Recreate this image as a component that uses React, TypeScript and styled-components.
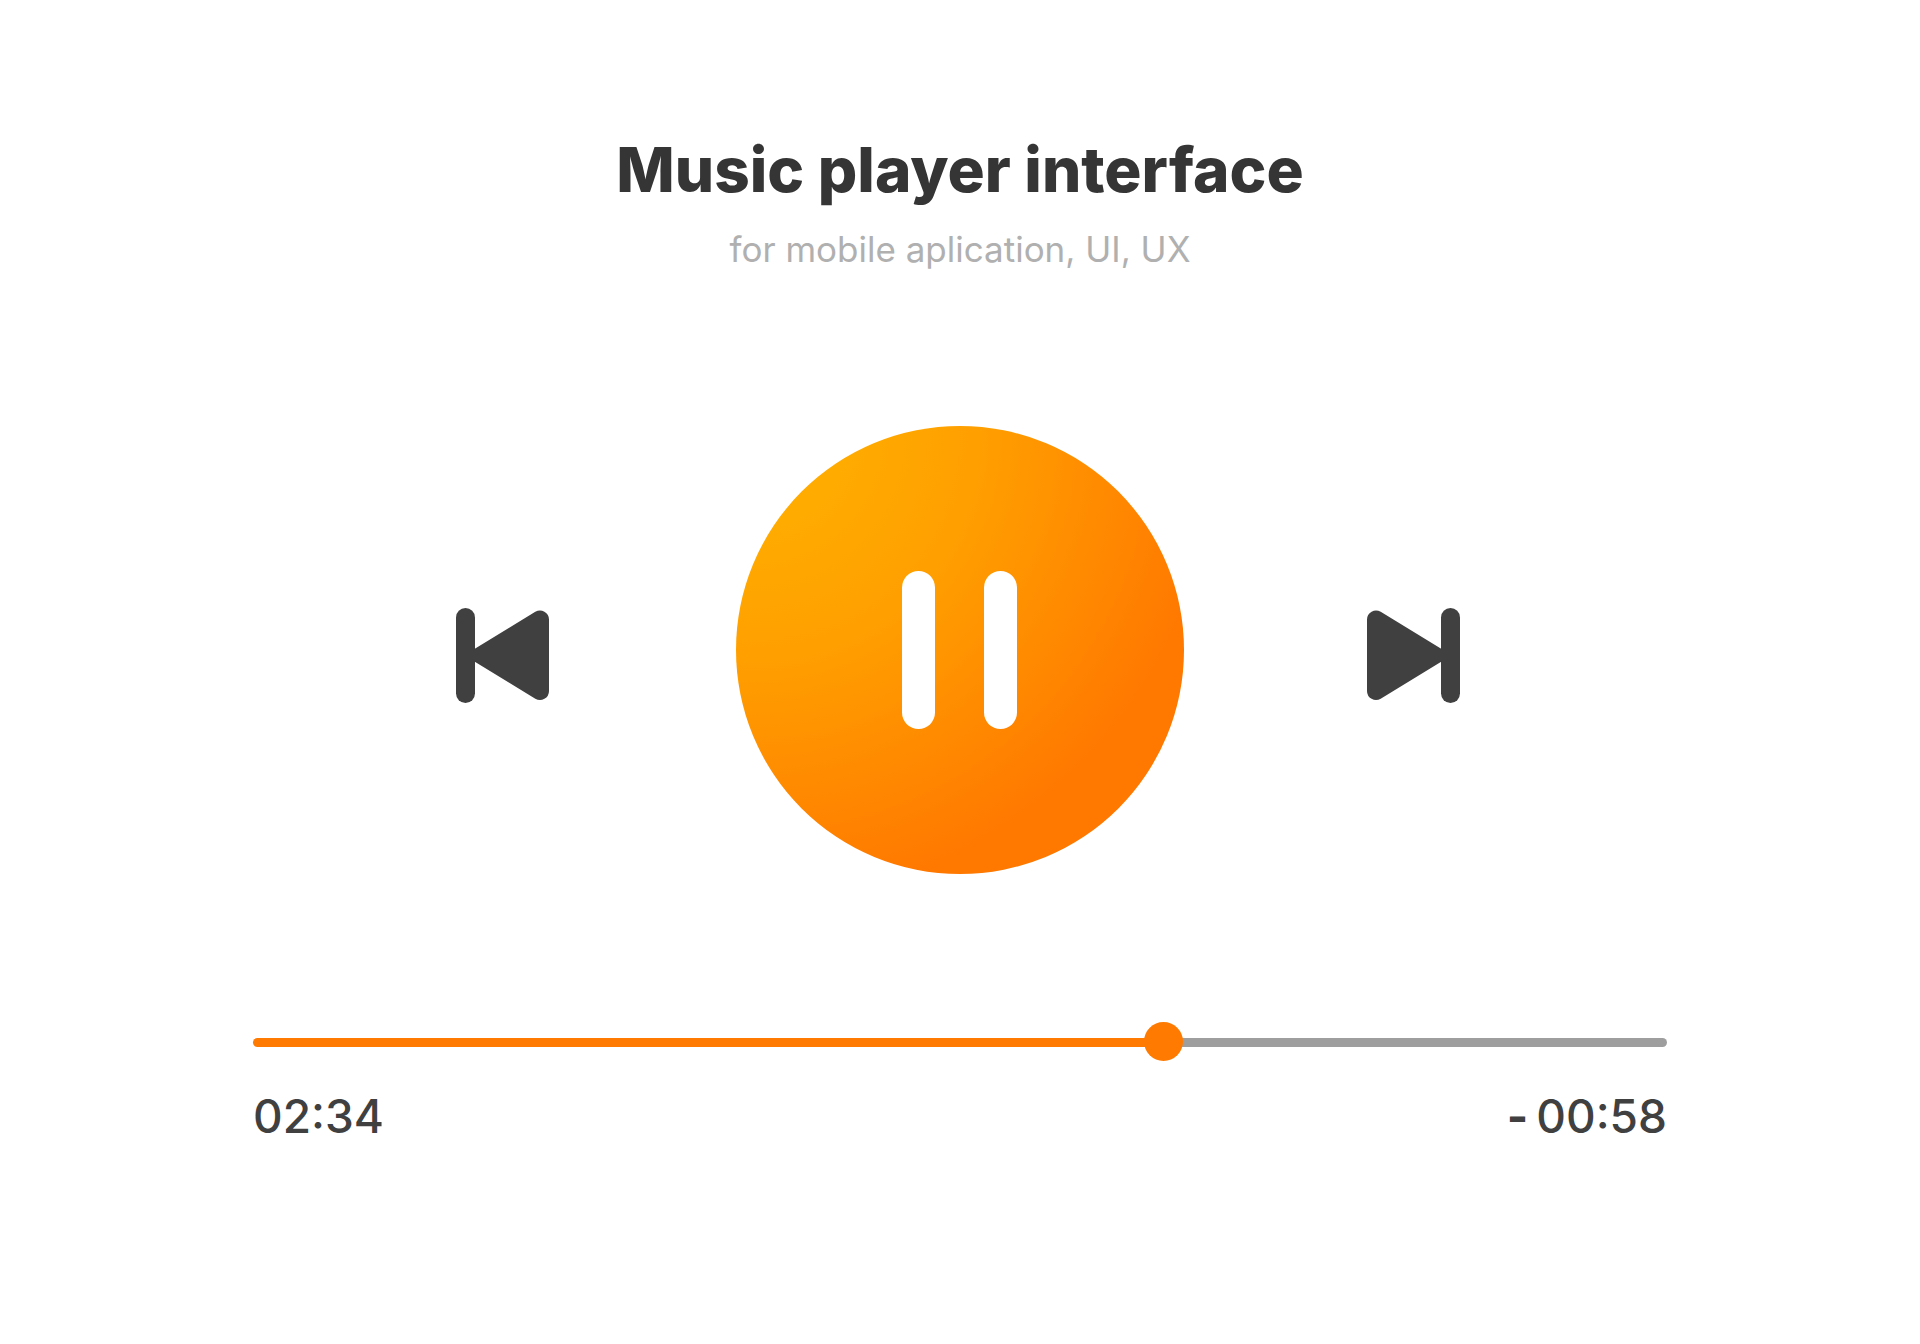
import React, { useState } from "react";
import styled, { createGlobalStyle } from "styled-components";

const GlobalStyle = createGlobalStyle`
  *, *::before, *::after { box-sizing: border-box; }
  body {
    margin: 0;
    background: #ffffff;
    font-family: Inter, "Liberation Sans", sans-serif;
  }
`;

const Player = styled.main`
  display: flex;
  flex-direction: column;
  width: calc(100% - 96px);
  max-width: 1414px;
  margin: 0 auto;
  padding: 134px 0;
`;

const Header = styled.header`
  display: flex;
  flex-direction: column;
  align-items: center;
  gap: 20px;
  text-align: center;
`;

const Title = styled.h1`
  margin: 0;
  font-size: 62px;
  line-height: 72px;
  font-weight: 800;
  color: #353535;
`;

const Subtitle = styled.p`
  margin: 0;
  font-size: 35px;
  line-height: 46px;
  font-weight: 400;
  color: #b0b0b0;
`;

const Controls = styled.div`
  display: flex;
  align-items: center;
  justify-content: center;
  gap: 180px;
  margin-top: 154px;
`;

const IconButton = styled.button`
  display: flex;
  padding: 0;
  border: 0;
  background: none;
  color: #404040;
  cursor: pointer;
`;

const SkipButton = styled(IconButton)`
  padding-top: 11px;
`;

const PlayButton = styled(IconButton)`
  align-items: center;
  justify-content: center;
  width: 448px;
  height: 448px;
  border-radius: 50%;
  color: #ffffff;
  background: radial-gradient(circle 470px at 4% 2%, #ffab00 20%, #ff9f00 48%, #ff7800);
`;

const Progress = styled.div`
  display: flex;
  flex-direction: column;
  gap: 24px;
  margin-top: 148px;
`;

const Seek = styled.input`
  appearance: none;
  width: 100%;
  height: 40px;
  margin: 0;
  background: none;
  cursor: pointer;

  &::-webkit-slider-runnable-track {
    height: 9px;
    border-radius: 5px;
    background: linear-gradient(to right, #ff7a00 var(--played), #9e9e9e var(--played));
  }

  &::-webkit-slider-thumb {
    appearance: none;
    width: 39px;
    height: 39px;
    margin-top: -16px;
    border-radius: 50%;
    background: #ff7a00;
  }
`;

const Times = styled.div`
  display: flex;
  justify-content: space-between;
`;

const Time = styled.span`
  display: flex;
  gap: 8px;
  font-size: 46px;
  line-height: 60px;
  font-weight: 500;
  color: #404040;
`;

const Minus = styled.span`
  font-weight: 700;
`;

function PreviousIcon() {
  return (
    <svg width="100" height="95" viewBox="0 0 100 95" fill="currentColor" aria-hidden="true">
      <rect width="19" height="95" rx="9.5" />
      <path d="M18 41.2 79.3 3.8A9 9 0 0 1 93 11.5V83a9 9 0 0 1-13.7 7.7L18 53.3Z" />
    </svg>
  );
}

function NextIcon() {
  return (
    <svg width="100" height="95" viewBox="0 0 100 95" fill="currentColor" aria-hidden="true">
      <rect x="77" width="19" height="95" rx="9.5" />
      <path d="M78 41.2 16.7 3.8A9 9 0 0 0 3 11.5V83a9 9 0 0 0 13.7 7.7L78 53.3Z" />
    </svg>
  );
}

function PauseIcon() {
  return (
    <svg width="116" height="158" viewBox="0 0 116 158" fill="currentColor" aria-hidden="true">
      <rect width="33" height="158" rx="16.5" />
      <rect x="82" width="33" height="158" rx="16.5" />
    </svg>
  );
}

function PlayIcon() {
  return (
    <svg width="116" height="158" viewBox="0 0 116 158" fill="currentColor" aria-hidden="true">
      <path d="M10 16a10 10 0 0 1 15-9l86 63a11 11 0 0 1 0 18l-86 63a10 10 0 0 1-15-9Z" />
    </svg>
  );
}

export default function App() {
  const [playing, setPlaying] = useState(true);
  const [position, setPosition] = useState(648);
  const played = { "--played": `${position / 10}%` } as React.CSSProperties;

  return (
    <>
      <GlobalStyle />
      <Player>
        <Header>
          <Title>Music player interface</Title>
          <Subtitle>for mobile aplication, UI, UX</Subtitle>
        </Header>
        <Controls>
          <SkipButton type="button" aria-label="Previous track">
            <PreviousIcon />
          </SkipButton>
          <PlayButton
            type="button"
            aria-label={playing ? "Pause" : "Play"}
            onClick={() => setPlaying(!playing)}
          >
            {playing ? <PauseIcon /> : <PlayIcon />}
          </PlayButton>
          <SkipButton type="button" aria-label="Next track">
            <NextIcon />
          </SkipButton>
        </Controls>
        <Progress>
          <Seek
            type="range"
            aria-label="Seek"
            min={0}
            max={1000}
            value={position}
            style={played}
            onChange={(event) => setPosition(Number(event.target.value))}
          />
          <Times>
            <Time>02:34</Time>
            <Time>
              <Minus>-</Minus>
              <span>00:58</span>
            </Time>
          </Times>
        </Progress>
      </Player>
    </>
  );
}
